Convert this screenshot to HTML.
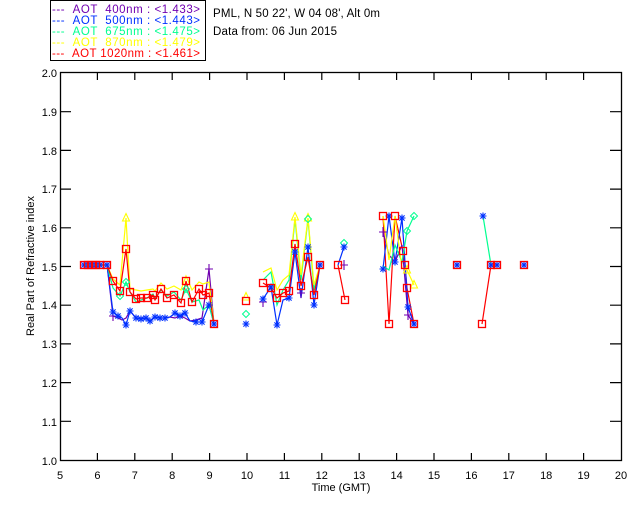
<!DOCTYPE html>
<html><head><meta charset="utf-8"><style>
html,body{margin:0;padding:0;background:#fff;}
svg{display:block;font-family:"Liberation Sans",sans-serif;}
</style></head><body>
<svg width="640" height="512" viewBox="0 0 640 512" xmlns="http://www.w3.org/2000/svg">
<defs>
<g id="sq"><rect x="-3.5" y="-3.5" width="7" height="7" fill="none" stroke="#f00" stroke-width="1.3"/></g>
<g id="st" stroke="#0030ff" stroke-width="1.1"><path d="M-3.5 0H3.5M0-3.5V3.5M-2.6-2.6L2.6 2.6M-2.6 2.6L2.6-2.6"/></g>
<g id="pl" stroke="#7000b0" stroke-width="1.1"><path d="M-4 0H4M0-5V5"/></g>
<g id="dm" fill="none" stroke="#00ff90" stroke-width="1"><path d="M0-3.5L3.5 0L0 3.5L-3.5 0Z"/></g>
<g id="tr" fill="none" stroke="#ffff00" stroke-width="1.1"><path d="M0-4.5L3.5 3H-3.5Z"/></g>
</defs>
<!-- legend -->
<rect x="50.5" y="0.5" width="155" height="60" fill="none" stroke="#000"/>
<g font-size="11.5">
<text x="52" y="13" fill="#7000b0" textLength="148">--- &#160;AOT &#160;400nm : &lt;1.433&gt;</text>
<text x="52" y="24" fill="#0030ff" textLength="148">--- &#160;AOT &#160;500nm : &lt;1.443&gt;</text>
<text x="52" y="35" fill="#00ff90" textLength="148">--- &#160;AOT &#160;675nm : &lt;1.475&gt;</text>
<text x="52" y="46" fill="#ffff00" textLength="148">--- &#160;AOT &#160;870nm : &lt;1.479&gt;</text>
<text x="52" y="57" fill="#f00" textLength="148">--- &#160;AOT 1020nm : &lt;1.461&gt;</text>
<text x="213" y="17" fill="#000" textLength="167">PML, N 50 22', W 04 08', Alt 0m</text>
<text x="213" y="35" fill="#000" textLength="124">Data from: 06 Jun 2015</text>
</g>
<!-- axes -->
<rect x="60.5" y="72.5" width="561" height="388" fill="none" stroke="#000" stroke-width="1.3"/>
<g stroke="#000" stroke-width="1.2">
<path d="M97.4 461v-8M134.8 461v-8M172.2 461v-8M209.6 461v-8M247 461v-8M284.4 461v-8M321.8 461v-8M359.2 461v-8M396.6 461v-8M434 461v-8M471.4 461v-8M508.8 461v-8M546.2 461v-8M583.6 461v-8"/>
<path d="M97.4 72v8M134.8 72v8M172.2 72v8M209.6 72v8M247 72v8M284.4 72v8M321.8 72v8M359.2 72v8M396.6 72v8M434 72v8M471.4 72v8M508.8 72v8M546.2 72v8M583.6 72v8"/>
<path d="M60 111.7h11M60 150.4h11M60 189.1h11M60 227.8h11M60 266.5h11M60 305.2h11M60 343.9h11M60 382.6h11M60 421.3h11"/>
<path d="M621 111.7h-11M621 150.4h-11M621 189.1h-11M621 227.8h-11M621 266.5h-11M621 305.2h-11M621 343.9h-11M621 382.6h-11M621 421.3h-11"/>
</g>
<g font-size="11" fill="#000" text-anchor="end">
<text x="57" y="77">2.0</text><text x="57" y="116">1.9</text><text x="57" y="155">1.8</text><text x="57" y="193">1.7</text><text x="57" y="232">1.6</text><text x="57" y="271">1.5</text><text x="57" y="309">1.4</text><text x="57" y="348">1.3</text><text x="57" y="387">1.2</text><text x="57" y="426">1.1</text><text x="57" y="465">1.0</text>
</g>
<g font-size="11" fill="#000" text-anchor="middle">
<text x="60" y="479">5</text><text x="97.4" y="479">6</text><text x="134.8" y="479">7</text><text x="172.2" y="479">8</text><text x="209.6" y="479">9</text><text x="247" y="479">10</text><text x="284.4" y="479">11</text><text x="321.8" y="479">12</text><text x="359.2" y="479">13</text><text x="396.6" y="479">14</text><text x="434" y="479">15</text><text x="471.4" y="479">16</text><text x="508.8" y="479">17</text><text x="546.2" y="479">18</text><text x="583.6" y="479">19</text><text x="621" y="479">20</text>
<text x="341" y="491">Time (GMT)</text>
<text transform="translate(34,266) rotate(-90)">Real Part of Refractive index</text>
</g>
<!-- series lines -->
<g fill="none" stroke-width="1.2">
<polyline stroke="#7000b0" points="84,265 107,265 113,316 118,318 122,320 126,318 130,311 136,318 141,318 146,318 150,321 155,317 160,318 165,318 170,317 175,318 180,316 185,318 190,321 196,320 202,318 209,269 214,324"/>
<polyline stroke="#0030ff" points="84,265 107,265 113,312 118,316 122,318 126,325 130,311 136,318 141,319 146,318 150,321 155,317 160,318 165,318 170,317 175,313 180,316 185,313 190,321 196,322 202,322 209,305 214,324"/>
<polyline stroke="#00ff90" points="84,265 107,265 113,288 120,296 126,282 130,292 136,302 141,300 147,298 153,294 155,298 161,290 167,296 174,292 181,300 186,289 192,302 199,300 203,310 209,305 214,324"/>
<polyline stroke="#ffff00" points="84,265 107,265 113,279 120,285 126,218 130,289 136,290 141,291 147,290 153,289 155,291 161,283 167,289 174,286 181,290 186,276 192,290 199,282 203,284 209,282 214,324"/>
<polyline stroke="#f00" points="84,265 107,265 113,281 120,291 126,249 130,292 136,299 141,298 147,298 153,295 155,300 161,289 167,298 174,295 181,303 186,281 192,302 199,289 203,295 209,293 214,324"/>
<polyline stroke="#0030ff" points="263,299 271,287 277,325 283,300 289,298 295,252 301,298 308,247 314,305 320,265"/>
<polyline stroke="#00ff90" points="263,280 271,272 277,305 283,290 289,280 295,219 301,280 308,219 314,290 320,265"/>
<polyline stroke="#ffff00" points="263,272 271,268 277,290 283,280 289,275 295,217 301,275 308,218 314,285 320,265"/>
<polyline stroke="#f00" points="263,283 271,288 277,298 283,293 289,291 295,244 301,286 308,257 314,295 320,265"/>
<polyline stroke="#f00" points="338,265 345,300"/>
<polyline stroke="#0030ff" points="338,265 344,247"/>
<polyline stroke="#f00" points="383,216 389,324 395,216 403,251 405,265 407,288 414,324"/>
<polyline stroke="#0030ff" points="383,269 389,216 395,262 402,218 408,307 414,324"/>
<polyline stroke="#7000b0" points="383,232 389,255 395,262 402,245 408,315 414,324"/>
<polyline stroke="#00ff90" points="383,266 389,270 395,245 402,262 407,231 414,216"/>
<polyline stroke="#ffff00" points="383,216 389,260 395,216 402,268 407,270 414,285"/>
<polyline stroke="#00ff90" points="483,216 491,265"/>
<polyline stroke="#f00" points="482,324 491,265 497,265"/>
</g>
<!-- markers -->
<g>
<use href="#st" x="84" y="265"/><use href="#st" x="88" y="265"/><use href="#st" x="92" y="265"/><use href="#st" x="96" y="265"/><use href="#st" x="100" y="265"/><use href="#st" x="107" y="265"/>
<use href="#tr" x="126" y="218"/><use href="#tr" x="295" y="217"/><use href="#tr" x="308" y="218"/><use href="#tr" x="407" y="270"/><use href="#tr" x="414" y="285"/><use href="#tr" x="246" y="297"/>
<use href="#dm" x="120" y="296"/><use href="#dm" x="126" y="282"/><use href="#dm" x="186" y="289"/><use href="#dm" x="246" y="314"/><use href="#dm" x="308" y="219"/><use href="#dm" x="414" y="216"/><use href="#dm" x="407" y="231"/><use href="#dm" x="344" y="243"/>
<use href="#pl" x="113" y="316"/><use href="#pl" x="209" y="269"/><use href="#pl" x="263" y="302"/><use href="#pl" x="301" y="293"/><use href="#pl" x="383" y="232"/><use href="#pl" x="408" y="315"/><use href="#pl" x="344" y="265"/>
<use href="#st" x="113" y="312"/><use href="#st" x="118" y="316"/><use href="#st" x="126" y="325"/><use href="#st" x="130" y="311"/><use href="#st" x="136" y="318"/><use href="#st" x="141" y="319"/><use href="#st" x="146" y="318"/><use href="#st" x="150" y="321"/><use href="#st" x="155" y="317"/><use href="#st" x="160" y="318"/><use href="#st" x="165" y="318"/><use href="#st" x="175" y="313"/><use href="#st" x="180" y="316"/><use href="#st" x="185" y="313"/><use href="#st" x="196" y="322"/><use href="#st" x="202" y="322"/><use href="#st" x="209" y="305"/><use href="#st" x="214" y="324"/>
<use href="#st" x="246" y="324"/><use href="#st" x="263" y="299"/><use href="#st" x="271" y="287"/><use href="#st" x="277" y="325"/><use href="#st" x="289" y="298"/><use href="#st" x="295" y="252"/><use href="#st" x="308" y="247"/><use href="#st" x="314" y="305"/><use href="#st" x="320" y="265"/><use href="#st" x="344" y="247"/>
<use href="#st" x="383" y="269"/><use href="#st" x="389" y="216"/><use href="#st" x="402" y="218"/><use href="#st" x="395" y="262"/><use href="#st" x="408" y="307"/><use href="#st" x="414" y="324"/>
<use href="#st" x="483" y="216"/><use href="#st" x="457" y="265"/><use href="#st" x="491" y="265"/><use href="#st" x="497" y="265"/><use href="#st" x="524" y="265"/>
<use href="#sq" x="84" y="265"/><use href="#sq" x="88" y="265"/><use href="#sq" x="92" y="265"/><use href="#sq" x="96" y="265"/><use href="#sq" x="100" y="265"/><use href="#sq" x="107" y="265"/>
<use href="#sq" x="113" y="281"/><use href="#sq" x="120" y="291"/><use href="#sq" x="126" y="249"/><use href="#sq" x="130" y="292"/><use href="#sq" x="136" y="299"/><use href="#sq" x="141" y="298"/><use href="#sq" x="147" y="298"/><use href="#sq" x="153" y="295"/><use href="#sq" x="155" y="300"/><use href="#sq" x="161" y="289"/><use href="#sq" x="167" y="298"/><use href="#sq" x="174" y="295"/><use href="#sq" x="181" y="303"/><use href="#sq" x="186" y="281"/><use href="#sq" x="192" y="302"/><use href="#sq" x="199" y="289"/><use href="#sq" x="203" y="295"/><use href="#sq" x="209" y="293"/><use href="#sq" x="214" y="324"/>
<use href="#sq" x="246" y="301"/><use href="#sq" x="263" y="283"/><use href="#sq" x="271" y="288"/><use href="#sq" x="277" y="298"/><use href="#sq" x="283" y="293"/><use href="#sq" x="289" y="291"/><use href="#sq" x="295" y="244"/><use href="#sq" x="301" y="286"/><use href="#sq" x="308" y="257"/><use href="#sq" x="314" y="295"/><use href="#sq" x="320" y="265"/><use href="#sq" x="338" y="265"/><use href="#sq" x="345" y="300"/>
<use href="#sq" x="383" y="216"/><use href="#sq" x="389" y="324"/><use href="#sq" x="395" y="216"/><use href="#sq" x="403" y="251"/><use href="#sq" x="405" y="265"/><use href="#sq" x="407" y="288"/><use href="#sq" x="414" y="324"/>
<use href="#sq" x="457" y="265"/><use href="#sq" x="482" y="324"/><use href="#sq" x="491" y="265"/><use href="#sq" x="497" y="265"/><use href="#sq" x="524" y="265"/>
</g>
</svg>
</body></html>
